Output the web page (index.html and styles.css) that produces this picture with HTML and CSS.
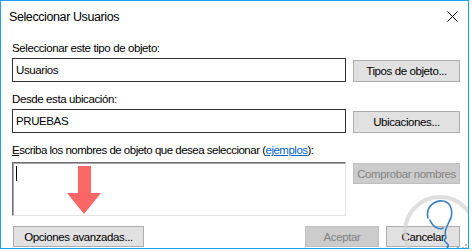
FILE: index.html
```html
<!DOCTYPE html>
<html lang="es">
<head>
	<meta charset="UTF-8">
	<title>Seleccionar Usuarios</title>
	<link rel="stylesheet" href="styles.css">
</head>
<body>

<div class="window">
	<div class="titlebar">
		<span class="title">Seleccionar Usuarios</span>
		<svg class="close" width="11" height="11" viewBox="0 0 11 11">
			<path d="M0.5 0.5 L10.5 10.5 M10.5 0.5 L0.5 10.5" stroke="#000" stroke-width="1" fill="none"/>
		</svg>
	</div>

	<div class="content">
		<div class="label">Seleccionar este tipo de objeto:</div>
		<div class="row">
			<div class="field">Usuarios</div>
			<button class="btn">Tipos de objeto...</button>
		</div>

		<div class="label">Desde esta ubicación:</div>
		<div class="row">
			<div class="field">PRUEBAS</div>
			<button class="btn">Ubicaciones...</button>
		</div>

		<div class="label label-names"><u>E</u>scriba los nombres de objeto que desea seleccionar (<a href="#">ejemplos</a>):</div>
		<div class="row row-names">
			<div class="names"><span class="caret"></span></div>
			<button class="btn disabled">Comprobar nombres</button>
		</div>

		<div class="actions">
			<button class="btn advanced">Opciones avanzadas...</button>
			<button class="btn disabled small">Aceptar</button>
			<button class="btn small">Cancelar</button>
		</div>
	</div>

	<!-- flecha roja encima del cuadro de nombres -->
	<svg class="arrow" width="36" height="49" viewBox="0 0 36 49">
		<path d="M12 0 H25 V27 H35 L18 48 L1 27 H12 Z" fill="#fb6767"/>
	</svg>

	<!-- marca de agua -->
	<svg class="watermark" width="80" height="70" viewBox="0 0 80 70">
		<circle cx="45" cy="44" r="35" fill="none" stroke="#d4d4d4" stroke-opacity="0.75" stroke-width="4"/>
		<path d="M33 30 C30 18 41 12 48 13 C57 14 59 26 54 34 C51 40 49 44 51 50 M35 32 C38 40 45 42 48 40 M51 50 C45 54 57 55 52 60 C50 63 60 62 63 60" fill="none" stroke="#3c7fc0" stroke-width="1.6" stroke-linecap="round"/>
		<g fill="#b9b9b9">
			<rect x="70" y="56" width="2" height="2"/>
			<rect x="67" y="59" width="2" height="2"/>
			<rect x="70" y="59" width="2" height="2"/>
		</g>
	</svg>
</div>

</body>
</html>
```

FILE: styles.css
```css
	*{
		margin: 0;
		padding: 0;
		box-sizing: border-box;
	}
	body{
		background: #fff;
		font-family: "Liberation Sans", Arial, sans-serif;
		color: #000;
	}
	.window{
		position: relative;
		width: 469px;
		height: 249px;
		border: 1px solid #1ba1ef;
		background: #fff;
		overflow: hidden;
	}
	.titlebar{
		height: 30px;
		display: flex;
		align-items: center;
		justify-content: space-between;
		padding: 0 10px 0 8px;
	}
	.title{
		font-size: 12.5px;
		letter-spacing: -0.4px;
		padding-top: 1px;
	}
	.close{
		display: block;
	}
	.content{
		padding: 0 8px 0 11px;
		font-size: 11.5px;
		letter-spacing: -0.4px;
	}
	.label{
		height: 14px;
		line-height: 14px;
		margin-top: 10px;
		margin-bottom: 3px;
		white-space: nowrap;
	}
	.label a{
		color: #0066cc;
	}
	.row{
		display: grid;
		grid-template-columns: 334px 107px;
		column-gap: 7px;
		align-items: end;
	}
	.field{
		height: 24px;
		line-height: 22px;
		border: 1px solid #333;
		padding-left: 3px;
	}
	.btn{
		height: 22px;
		font-family: inherit;
		font-size: inherit;
		letter-spacing: inherit;
		color: #000;
		background: #e1e1e1;
		border: 1px solid #adadad;
	}
	.btn.disabled{
		background: #cccccc;
		border-color: #bfbfbf;
		color: #838383;
	}
	.label-names{
		margin-top: 10px;
		margin-bottom: 5px;
		letter-spacing: -0.5px;
	}
	.row-names{
		align-items: start;
	}
	.row-names .btn{
		margin-top: 1px;
		height: 21px;
	}
	.names{
		height: 54px;
		border-top: 1px solid #6e6e6e;
		border-left: 1px solid #6e6e6e;
		border-right: 1px solid #e3e3e3;
		border-bottom: 1px solid #e3e3e3;
		box-shadow: inset 1px 1px 0 #a8a8a8;
		padding: 3px 0 0 3px;
	}
	.caret{
		display: block;
		width: 1px;
		height: 15px;
		background: #000;
	}
	.actions{
		display: flex;
		margin-top: 10px;
	}
	.actions .btn{
		height: 21px;
	}
	.advanced{
		width: 131px;
		margin-left: 1px;
		margin-right: auto;
	}
	.small{
		width: 74px;
		margin-left: 7px;
	}
	.arrow{
		position: absolute;
		left: 65px;
		top: 165px;
	}
	.watermark{
		position: absolute;
		left: 394px;
		top: 187px;
	}
```
